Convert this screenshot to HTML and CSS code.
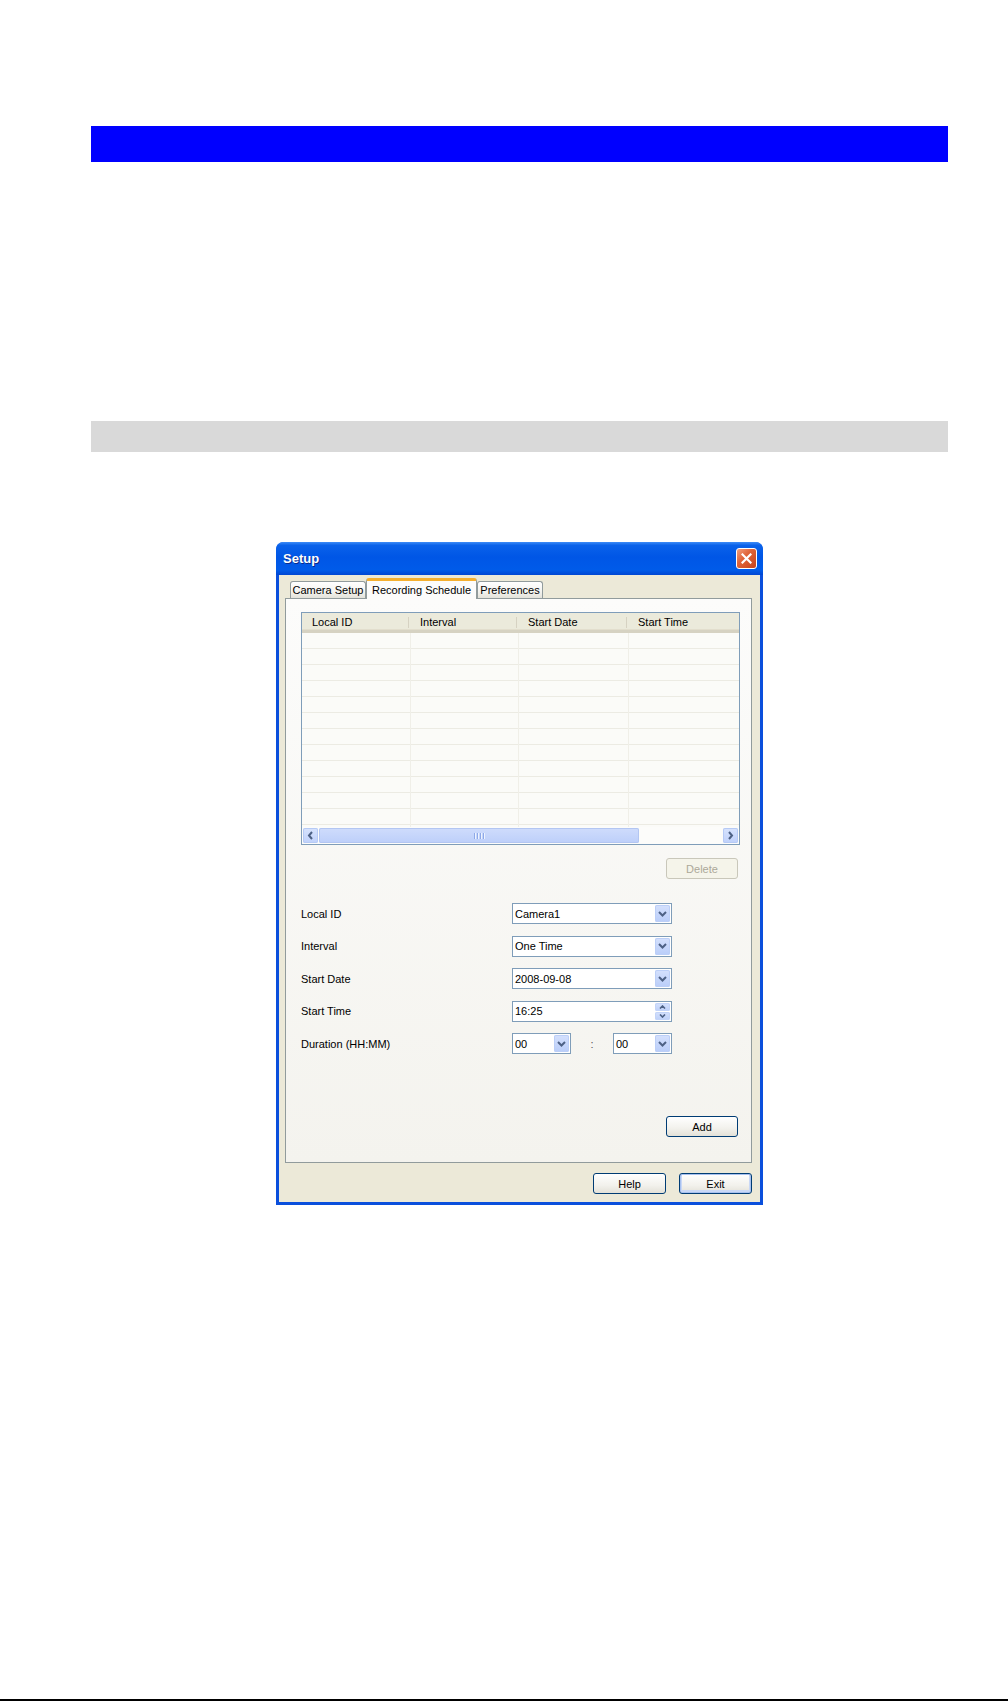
FILE: index.html
```html
<!DOCTYPE html>
<html lang="en">
<head>
  <meta charset="UTF-8" />
  <title>Setup – Recording Schedule</title>
  <link rel="stylesheet" href="styles.css">
</head>
<body>

  <div class="page">
    <div class="band band-blue"></div>
    <div class="band band-grey"></div>

    <div class="figure">
      <div class="dialog">
        <div class="titlebar">
          <span class="title">Setup</span>
          <span class="close-btn">
            <svg width="11" height="11" viewBox="0 0 11 11"><path d="M1.5 1.5 L9.5 9.5 M9.5 1.5 L1.5 9.5" stroke="#fff" stroke-width="2.2" stroke-linecap="square" /></svg>
          </span>
        </div>

        <div class="dialog-body">
          <div class="tabs">
            <div class="tab tab-camera">Camera Setup</div>
            <div class="tab tab-schedule active">Recording Schedule</div>
            <div class="tab tab-prefs">Preferences</div>
          </div>

          <div class="tab-page">
            <!-- schedule list -->
            <div class="listview">
              <div class="lv-head">
                <div class="lv-col">Local ID</div>
                <div class="lv-col">Interval</div>
                <div class="lv-col">Start Date</div>
                <div class="lv-col">Start Time</div>
              </div>
              <div class="lv-body"></div>
              <div class="hscroll">
                <div class="sb-btn">
                  <svg width="7" height="9" viewBox="0 0 7 9"><path d="M5 1 L2 4.5 L5 8" fill="none" stroke="#4d6185" stroke-width="2" /></svg>
                </div>
                <div class="sb-thumb">
                  <span class="grip"></span><span class="grip"></span><span class="grip"></span><span class="grip"></span>
                </div>
                <div class="sb-track"></div>
                <div class="sb-btn">
                  <svg width="7" height="9" viewBox="0 0 7 9"><path d="M2 1 L5 4.5 L2 8" fill="none" stroke="#4d6185" stroke-width="2" /></svg>
                </div>
              </div>
            </div>

            <div class="btn-row delete-row">
              <button class="btn" disabled>Delete</button>
            </div>

            <!-- new schedule entry -->
            <div class="form">
              <div class="field">
                <label>Local ID</label>
                <div class="combo wide">
                  <span class="combo-text">Camera1</span>
                  <span class="drop"><svg width="9" height="6" viewBox="0 0 9 6"><path d="M1 1 L4.5 4.5 L8 1" fill="none" stroke="#4d6185" stroke-width="2" /></svg></span>
                </div>
              </div>
              <div class="field">
                <label>Interval</label>
                <div class="combo wide">
                  <span class="combo-text">One Time</span>
                  <span class="drop"><svg width="9" height="6" viewBox="0 0 9 6"><path d="M1 1 L4.5 4.5 L8 1" fill="none" stroke="#4d6185" stroke-width="2" /></svg></span>
                </div>
              </div>
              <div class="field">
                <label>Start Date</label>
                <div class="combo wide">
                  <span class="combo-text">2008-09-08</span>
                  <span class="drop"><svg width="9" height="6" viewBox="0 0 9 6"><path d="M1 1 L4.5 4.5 L8 1" fill="none" stroke="#4d6185" stroke-width="2" /></svg></span>
                </div>
              </div>
              <div class="field">
                <label>Start Time</label>
                <div class="combo wide">
                  <span class="combo-text">16:25</span>
                  <span class="spin">
                    <span class="spin-half"><svg width="7" height="4" viewBox="0 0 7 4"><path d="M1 3.5 L3.5 1 L6 3.5" fill="none" stroke="#4d6185" stroke-width="1.6" /></svg></span>
                    <span class="spin-half"><svg width="7" height="4" viewBox="0 0 7 4"><path d="M1 0.5 L3.5 3 L6 0.5" fill="none" stroke="#4d6185" stroke-width="1.6" /></svg></span>
                  </span>
                </div>
              </div>
              <div class="field">
                <label>Duration (HH:MM)</label>
                <div class="combo narrow">
                  <span class="combo-text">00</span>
                  <span class="drop"><svg width="9" height="6" viewBox="0 0 9 6"><path d="M1 1 L4.5 4.5 L8 1" fill="none" stroke="#4d6185" stroke-width="2" /></svg></span>
                </div>
                <span class="colon">:</span>
                <div class="combo narrow">
                  <span class="combo-text">00</span>
                  <span class="drop"><svg width="9" height="6" viewBox="0 0 9 6"><path d="M1 1 L4.5 4.5 L8 1" fill="none" stroke="#4d6185" stroke-width="2" /></svg></span>
                </div>
              </div>
            </div>

            <div class="btn-row add-row">
              <button class="btn">Add</button>
            </div>
          </div>

          <div class="dialog-buttons">
            <button class="btn">Help</button>
            <button class="btn default">Exit</button>
          </div>
        </div>
      </div>
    </div>
  </div>

  <div class="page-rule"></div>

</body>
</html>
```

FILE: styles.css
```css
body {
  margin: 0;
  padding: 0;
  background: #fff;
  font-family: "Liberation Sans", Arial, sans-serif;
}
.page {
  width: 857px;
  margin-left: 91px;
  padding-top: 126px;
}
.band-blue {
  height: 36px;
  background: #0000ff;
}
.band-grey {
  height: 31px;
  margin-top: 259px;
  background: #d9d9d9;
}
.figure {
  margin-top: 90px;
  display: flex;
  justify-content: center;
}
.page-rule {
  height: 2px;
  margin-top: 494px;
  background: #000;
}

/* XP style dialog */
.dialog {
  width: 487px;
  background: #0a4fdc;
  border-radius: 8px 8px 0 0;
  font-size: 11px;
  color: #000;
}
.titlebar {
  height: 33px;
  display: flex;
  align-items: center;
  justify-content: space-between;
  padding: 0 6px 0 7px;
  border-radius: 7px 7px 0 0;
  background: linear-gradient(#3d8cf7 0%, #0a62ea 10%, #0056e6 45%, #005be9 85%, #0046d2 100%);
}
.title {
  color: #fff;
  font-weight: bold;
  font-size: 13px;
  text-shadow: 1px 1px 0 #0c2a8a;
}
.close-btn {
  width: 19px;
  height: 19px;
  display: flex;
  align-items: center;
  justify-content: center;
  border: 1px solid #fff;
  border-radius: 3px;
  background: linear-gradient(135deg, #f2a07f 0%, #e0653a 40%, #c8421a 100%);
}
.dialog-body {
  margin: 0 3px 3px;
  padding: 3px 8px 8px 6px;
  background: #ece9d8;
}

/* tabs */
.tabs {
  display: flex;
  align-items: flex-start;
  height: 21px;
  padding-left: 5px;
  margin-bottom: -1px;
  position: relative;
  z-index: 1;
}
.tab {
  height: 16px;
  margin-top: 3px;
  display: flex;
  align-items: center;
  justify-content: center;
  border: 1px solid #919b9c;
  border-bottom: none;
  border-radius: 3px 3px 0 0;
  background: linear-gradient(#ffffff, #f3f3ef 60%, #e3e2da);
  box-sizing: content-box;
}
.tab-camera { width: 74px; }
.tab-schedule { width: 109px; }
.tab-prefs { width: 64px; }
.tab.active {
  height: 18px;
  margin-top: 0;
  border-top: 3px solid #f5b030;
  background: #fcfcfb;
}
.tab-page {
  border: 1px solid #919b9c;
  background: linear-gradient(#fcfcfb, #f4f3ee);
  padding: 13px 11px 25px 15px;
}

/* list view */
.listview {
  border: 1px solid #7f9db9;
  background: #fbfbf8;
  display: flex;
  flex-direction: column;
}
.lv-head {
  height: 17px;
  display: grid;
  grid-template-columns: 108px 108px 110px 1fr;
  background: #ebeadb;
  border-bottom: 3px solid #d6d2c2;
  box-shadow: inset 0 -1px 0 #e2decd;
}
.lv-col {
  display: flex;
  align-items: center;
  padding-left: 10px;
  border-right: 1px solid transparent;
  background: linear-gradient(#d6d2c2, #d6d2c2) no-repeat right 4px / 1px 11px;
}
.lv-col:last-child {
  background: none;
}
.lv-body {
  height: 194px;
  background:
    linear-gradient(#f0efe8, #f0efe8) no-repeat 108px 0 / 1px 100%,
    linear-gradient(#f0efe8, #f0efe8) no-repeat 216px 0 / 1px 100%,
    linear-gradient(#f0efe8, #f0efe8) no-repeat 326px 0 / 1px 100%,
    repeating-linear-gradient(to bottom, transparent 0 15px, #ecebe3 15px 16px);
}
.hscroll {
  height: 17px;
  display: flex;
  background: #fcfcfa;
}
.sb-btn {
  width: 15px;
  height: 15px;
  margin: 1px;
  display: flex;
  align-items: center;
  justify-content: center;
  border-radius: 2px;
  background: linear-gradient(#d7e3fd, #bfd1fb);
  box-shadow: inset 0 0 0 1px #b6caf5;
}
.sb-thumb {
  width: 320px;
  height: 15px;
  margin: 1px 0;
  display: flex;
  align-items: center;
  justify-content: center;
  gap: 1px;
  border-radius: 2px;
  background: linear-gradient(#cfdcfc, #bdcffa);
  box-shadow: inset 0 0 0 1px #b3c6f2;
}
.grip {
  width: 1px;
  height: 6px;
  background: #8ea9e8;
  border-right: 1px solid #eef3fe;
}
.sb-track {
  flex: 1;
}

/* buttons */
.btn {
  width: 72px;
  height: 21px;
  padding: 0;
  font-family: "Liberation Sans", Arial, sans-serif;
  font-size: 11px;
  color: #000;
  border: 1px solid #003c74;
  border-radius: 3px;
  background: linear-gradient(#ffffff, #f2f1ec 60%, #e3e1d8);
}
.btn:disabled {
  border-color: #c9c7ba;
  color: #aca899;
  background: #f5f4ea;
}
.btn.default {
  box-shadow: inset 0 0 0 1px #a8c1ef, inset 0 -1px 0 2px #c9d8f6;
}
.btn-row {
  display: flex;
  justify-content: flex-end;
  margin-top: 10px;
  padding-right: 2px;
}
.delete-row {
  margin-top: 13px;
}
.add-row {
  margin-top: 62px;
}

/* form */
.form {
  margin-top: 24px;
  display: flex;
  flex-direction: column;
  gap: 11.5px;
}
.field {
  display: flex;
  align-items: center;
  height: 21px;
}
.field label {
  width: 211px;
}
.combo {
  height: 19px;
  display: flex;
  align-items: center;
  border: 1px solid #7f9db9;
  background: #fff;
}
.combo.wide { width: 158px; }
.combo.narrow { width: 57px; }
.combo-text {
  flex: 1;
  padding-left: 2px;
}
.drop {
  width: 15px;
  height: 17px;
  margin-right: 1px;
  display: flex;
  align-items: center;
  justify-content: center;
  border-radius: 2px;
  background: linear-gradient(#d5e1fd, #b9cdf9);
  box-shadow: inset 0 0 0 1px #bccff7;
}
.spin {
  width: 15px;
  height: 17px;
  margin-right: 1px;
  display: flex;
  flex-direction: column;
  gap: 1px;
}
.spin-half {
  flex: 1;
  display: flex;
  align-items: center;
  justify-content: center;
  border-radius: 2px;
  background: linear-gradient(#d5e1fd, #bdd0f9);
  box-shadow: inset 0 0 0 1px #c3d4f8;
}
.colon {
  width: 42px;
  text-align: center;
  color: #555;
}

.dialog-buttons {
  display: flex;
  justify-content: flex-end;
  gap: 13px;
  margin-top: 10px;
}
.dialog-buttons .btn {
  width: 73px;
}
```
